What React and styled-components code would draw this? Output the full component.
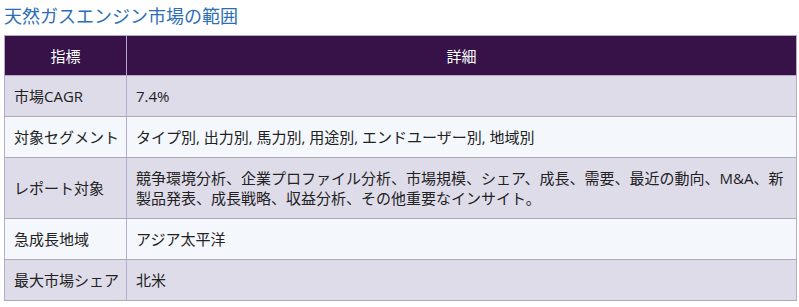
import React from "react";
import styled, { createGlobalStyle } from "styled-components";

const GlobalStyle = createGlobalStyle`
  body {
    margin: 0;
    background: #ffffff;
    font-family: "Open Sans", "Noto Sans CJK JP", sans-serif;
  }
`;

const Wrapper = styled.section`
  padding: 2px 2px 0 4px;
`;

const Title = styled.h2`
  margin: 0 0 7px;
  font-size: 18px;
  line-height: 26px;
  font-weight: 400;
  color: #2c6db5;
  font-family: "Noto Sans CJK JP", sans-serif;
`;

const Table = styled.table`
  width: 100%;
  border-collapse: collapse;
  table-layout: fixed;
  font-size: 15px;
  color: #222222;
  font-family: "Open Sans", "Noto Sans CJK JP", sans-serif;
`;

const HeadCell = styled.th`
  background: #361249;
  color: #ffffff;
  font-weight: 400;
  text-align: center;
  height: 39px;
  padding: 0 10px;
  border: 1px solid #b4a9c9;
  font-family: "Noto Sans CJK JP", sans-serif;
`;

const Row = styled.tr`
  background: ${(p) => (p.$odd ? "#dfdcea" : "#f4f7fc")};
`;

const Cell = styled.td`
  padding: 10px 6px 10px 9px;
  line-height: 20px;
  vertical-align: middle;
  border-left: 1px solid #b4add0;
  border-right: 1px solid #b4add0;
  border-bottom: 1px solid #adaab8;
  white-space: ${(p) => (p.$label ? "nowrap" : "normal")};
  word-break: break-all;
`;

const rows = [
  ["市場CAGR", "7.4%"],
  ["対象セグメント", "タイプ別, 出力別, 馬力別, 用途別, エンドユーザー別, 地域別"],
  [
    "レポート対象",
    "競争環境分析、企業プロファイル分析、市場規模、シェア、成長、需要、最近の動向、M&A、新製品発表、成長戦略、収益分析、その他重要なインサイト。",
  ],
  ["急成長地域", "アジア太平洋"],
  ["最大市場シェア", "北米"],
];

export default function App() {
  return (
    <Wrapper>
      <GlobalStyle />
      <Title>天然ガスエンジン市場の範囲</Title>
      <Table>
        <colgroup>
          <col style={{ width: "122px" }} />
          <col />
        </colgroup>
        <thead>
          <tr>
            <HeadCell>指標</HeadCell>
            <HeadCell>詳細</HeadCell>
          </tr>
        </thead>
        <tbody>
          {rows.map(([label, value], i) => (
            <Row key={label} $odd={i % 2 === 0}>
              <Cell $label>{label}</Cell>
              <Cell>{value}</Cell>
            </Row>
          ))}
        </tbody>
      </Table>
    </Wrapper>
  );
}
